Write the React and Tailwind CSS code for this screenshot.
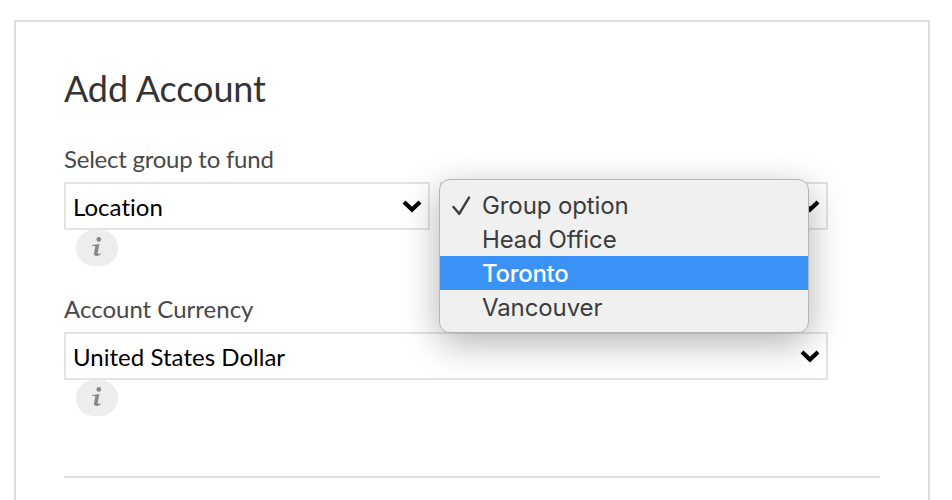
import { useState } from 'react';

const groupOptions = ['Group option', 'Head Office', 'Toronto', 'Vancouver'];

function Chevron() {
  return (
    <svg width="20" height="14" viewBox="0 0 20 14" fill="none" className="shrink-0 translate-y-px">
      <path d="M2 2 L10 9.6 L18 2" stroke="#000" strokeWidth="4.2" />
    </svg>
  );
}

function SelectBox({ value, onClick }) {
  return (
    <button
      type="button"
      onClick={onClick}
      className="flex h-12 w-full items-center justify-between border-2 border-[#e3e3e3] bg-white pr-1.5 pl-[7px] text-left text-[24px] leading-[44px] tracking-[0.03px] text-black [font-variant-ligatures:none]"
    >
      <span className="pt-0.5">{value}</span>
      <Chevron />
    </button>
  );
}

function InfoBadge() {
  return (
    <div className="ml-3 flex h-9 w-[42px] items-center justify-center rounded-[18px] bg-[#ededed]">
      <svg width="13" height="22" viewBox="0 0 12 20" className="-translate-y-px">
        <circle cx="7.2" cy="3" r="2.2" fill="#888" />
        <path
          d="M1.2 8.2 L7.8 7.2 L6.2 15.2 C6 16.4 6.8 16.6 8.8 15.8 L8.8 17 C6.6 18.6 2.2 19 2.7 15.8 L4 9.6 C4 9 2.8 9.1 1.2 9.4 Z"
          fill="#888"
        />
      </svg>
    </div>
  );
}

function GroupMenu({ selected, highlighted, onHover, onSelect }) {
  return (
    <ul className="absolute -top-[3px] -left-px z-10 h-[154px] w-[370px] rounded-[11px] border border-[#b5b5b5] bg-[#f0f0f0] py-2 font-[Inter,sans-serif] text-[24px] text-[#3c3c3c] shadow-[0_10px_36px_rgba(0,0,0,0.3)]">
      {groupOptions.map((option) => (
        <li
          key={option}
          onMouseEnter={() => onHover(option)}
          onClick={() => onSelect(option)}
          className={
            option === highlighted
              ? 'flex h-[34px] items-center bg-[#3b92f6] font-medium tracking-[-0.3px] text-white'
              : 'flex h-[34px] items-center tracking-[-0.1px]'
          }
        >
          <span className="flex w-[42px] pt-0.5 pl-3">
            {option === selected && (
              <svg width="20" height="20" viewBox="0 0 20 20" fill="none">
                <path
                  d="M1.5 11 L7.2 17.8 L17 1.6"
                  stroke="currentColor"
                  strokeWidth="2.4"
                  strokeLinecap="round"
                  strokeLinejoin="round"
                />
              </svg>
            )}
          </span>
          <span className="pt-0.5 leading-[34px]">{option}</span>
        </li>
      ))}
    </ul>
  );
}

export default function App() {
  const [group, setGroup] = useState('Group option');
  const [highlighted, setHighlighted] = useState('Toronto');
  const [menuOpen, setMenuOpen] = useState(true);

  const handleSelect = (option) => {
    setGroup(option);
    setMenuOpen(false);
  };

  return (
    <div className="h-[500px] overflow-hidden bg-white pt-5 pr-[22px] pl-3.5 font-[Lato,sans-serif]">
      <div className="h-[520px] border-2 border-[#dedede] px-12 pt-11">
        <h1 className="text-[36px] leading-[44px] tracking-[-0.12px] text-[#333]">Add Account</h1>

        {/* Group */}
        <div className="mt-[34px] w-[764px]">
          <label className="block h-[38px] text-[24px] leading-[30px] tracking-[-0.24px] text-[#484848]">
            Select group to fund
          </label>
          <div className="flex gap-2.5">
            <div className="w-[366px]">
              <SelectBox value="Location" />
            </div>
            <div className="relative w-[388px]">
              <SelectBox value={menuOpen ? '' : group} onClick={() => setMenuOpen(!menuOpen)} />
              {menuOpen && (
                <GroupMenu
                  selected={group}
                  highlighted={highlighted}
                  onHover={setHighlighted}
                  onSelect={handleSelect}
                />
              )}
            </div>
          </div>
          <InfoBadge />
        </div>

        {/* Currency */}
        <div className="mt-7 w-[764px]">
          <label className="block h-[38px] text-[24px] leading-[30px] text-[#484848]">Account Currency</label>
          <SelectBox value="United States Dollar" />
          <InfoBadge />
        </div>

        <hr className="mt-[60px] border-t-2 border-[#dedede]" />
      </div>
    </div>
  );
}
